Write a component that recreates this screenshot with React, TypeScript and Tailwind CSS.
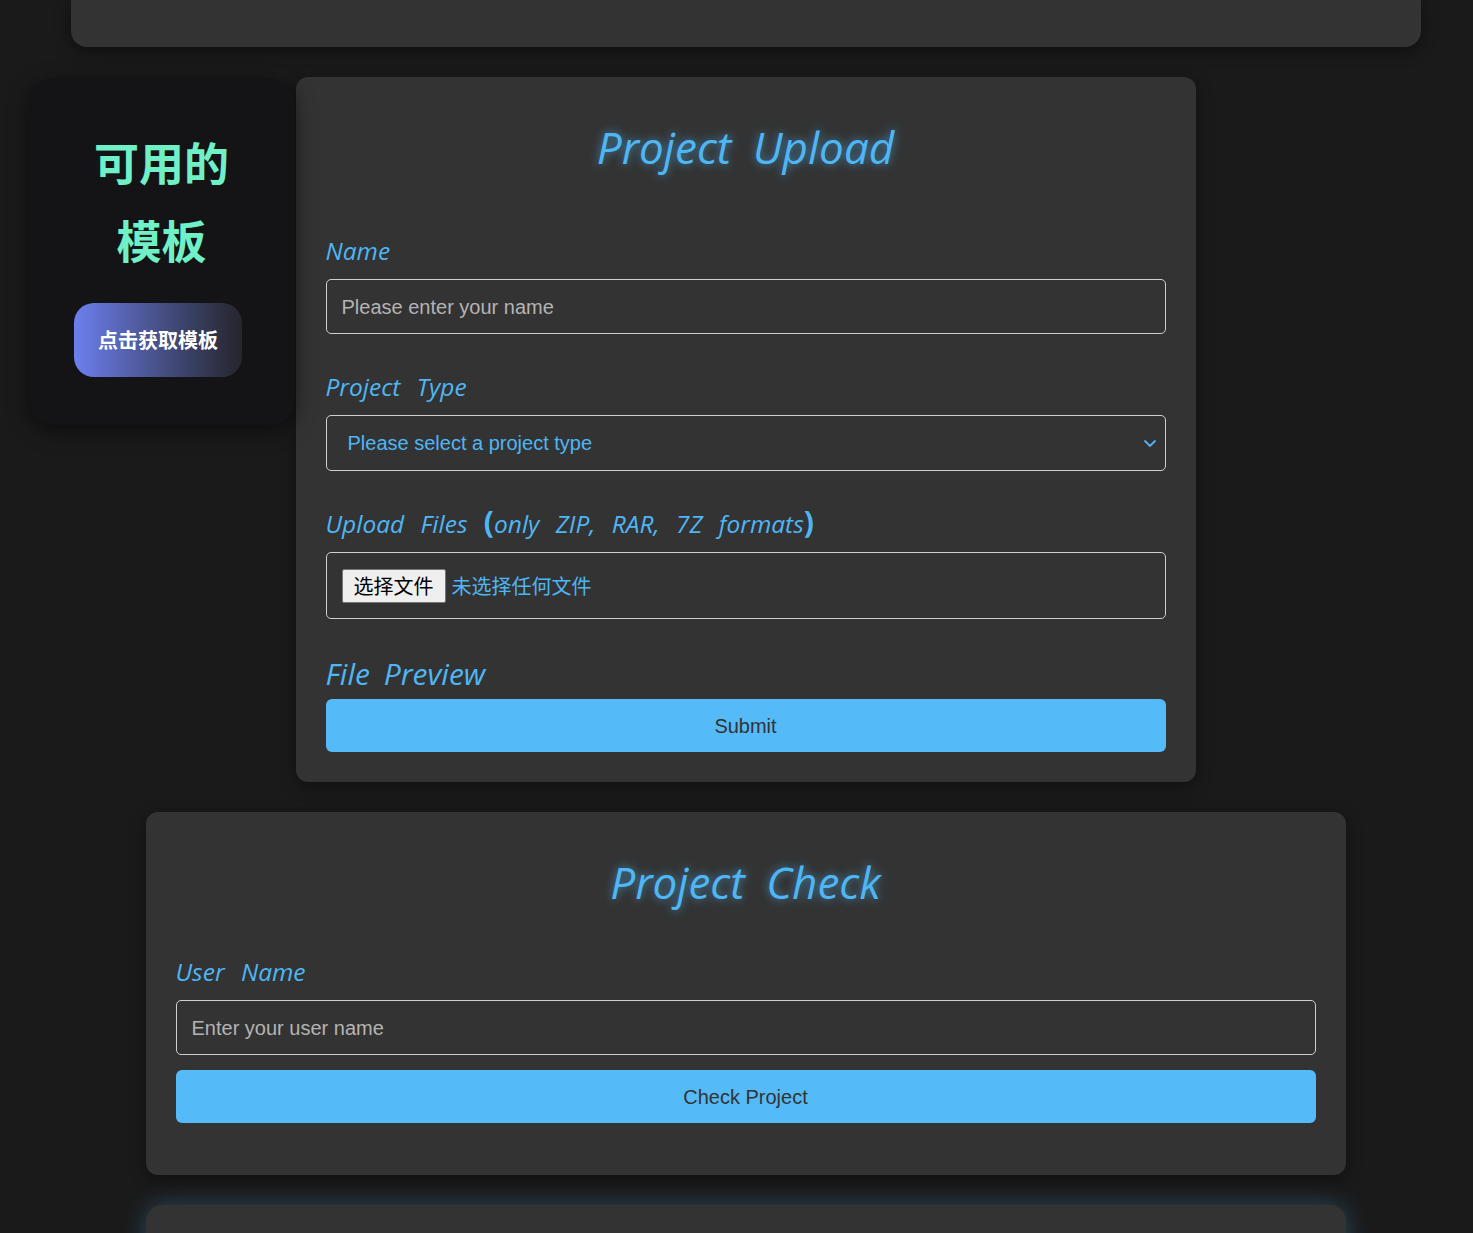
import React from "react";

const labelFont = { fontFamily: '"Open Sans", "Noto Sans", sans-serif' };

function Label({ children, big = false }: { children: React.ReactNode; big?: boolean }) {
  return (
    <div
      style={labelFont}
      className={`italic text-[#4fb6f5] ${big ? "text-[30px] h-[36px] leading-[36px] [word-spacing:6px]" : "text-[24.5px] h-[32px] leading-[32px] [word-spacing:10px]"}`}
    >
      {children}
    </div>
  );
}

function Title({ children }: { children: React.ReactNode }) {
  return (
    <h1
      style={labelFont}
      className="italic text-center text-[44px] h-[80px] leading-[80px] text-[#4fb6f5] [word-spacing:10px] [text-shadow:0_0_10px_rgba(79,182,245,0.7)]"
    >
      {children}
    </h1>
  );
}

export default function App() {
  const sans = { fontFamily: '"Liberation Sans", Arial, sans-serif' };
  const cjk = { fontFamily: '"Noto Sans CJK SC", sans-serif' };
  return (
    <div className="relative min-h-screen bg-[#1a1a1a] pl-[18px] overflow-hidden">
      {/* top card (bottom part) */}
      <div className="mx-auto w-[1350px] h-[47px] bg-[#333333] rounded-b-[16px] shadow-[0_4px_16px_rgba(0,0,0,0.45)]" />

      {/* sidebar */}
      <div className="absolute left-[28px] top-[78px] w-[267px] h-[347px] rounded-[26px] bg-[#141416] shadow-[0_6px_20px_rgba(0,0,0,0.5)] flex flex-col items-center pt-[45px]">
        <div style={cjk} className="text-[45px] leading-[78px] font-bold text-[#6ff0c6] text-center">
          <div>可用的</div>
          <div>模板</div>
        </div>
        <button
          style={cjk}
          className="mt-[24px] -ml-[7px] w-[168px] h-[74px] rounded-[20px] bg-gradient-to-r from-[#6d7ff0] to-[#25252d] text-white text-[20px] font-bold"
        >
          点击获取模板
        </button>
      </div>

      {/* upload card */}
      <div className="mx-auto mt-[30px] w-[900px] bg-[#333333] rounded-[12px] p-[30px] shadow-[0_4px_16px_rgba(0,0,0,0.4)]">
        <Title>Project Upload</Title>
        <div className="mt-[48px]">
          <Label>Name</Label>
          <div
            style={sans}
            className="mt-[12px] h-[55px] border border-[#cfcfcf] rounded-[5px] px-[15px] flex items-center text-[20px] text-[#b4b4b4]"
          >
            Please enter your name
          </div>
        </div>
        <div className="mt-[37px]">
          <Label>Project Type</Label>
          <div
            style={sans}
            className="mt-[12px] h-[56px] border border-[#cfcfcf] rounded-[5px] pl-[21px] pr-[7px] flex items-center justify-between text-[20px] text-[#4fb6f5]"
          >
            <span>Please select a project type</span>
            <svg width="16" height="16" viewBox="0 0 16 16" fill="none" stroke="#4fb6f5" strokeWidth="1.8">
              <path d="M2.5 5.5l5.5 5.5 5.5-5.5" />
            </svg>
          </div>
        </div>
        <div className="mt-[37px]">
          <Label>
            Upload Files <span className="font-bold not-italic text-[30px] leading-[20px]">(</span>only ZIP, RAR, 7Z formats
            <span className="font-bold not-italic text-[30px] leading-[20px]">)</span>
          </Label>
          <div className="mt-[12px] h-[67px] border border-[#cfcfcf] rounded-[5px] px-[15px] flex items-center">
            <span
              style={cjk}
              className="h-[34px] px-[11px] bg-[#efefef] border border-[#767676] rounded-[2px] text-[20px] leading-[32px] text-black"
            >
              选择文件
            </span>
            <span style={cjk} className="ml-[6px] text-[20px] text-[#4fb6f5]">
              未选择任何文件
            </span>
          </div>
        </div>
        <div className="mt-[37px]">
          <Label big>File Preview</Label>
        </div>
        <button
          style={sans}
          className="mt-[7px] w-full h-[53px] rounded-[6px] bg-[#54baf8] text-[20px] text-[#333333]"
        >
          Submit
        </button>
      </div>

      {/* check card */}
      <div className="mx-auto mt-[30px] w-[1200px] bg-[#333333] rounded-[12px] px-[30px] pt-[30px] pb-[52px] shadow-[0_4px_16px_rgba(0,0,0,0.4)]">
        <Title>Project Check</Title>
        <div className="mt-[34px]">
          <Label>User Name</Label>
          <div
            style={sans}
            className="mt-[12px] h-[55px] border border-[#cfcfcf] rounded-[5px] px-[15px] flex items-center text-[20px] text-[#b4b4b4]"
          >
            Enter your user name
          </div>
        </div>
        <button
          style={sans}
          className="mt-[15px] w-full h-[53px] rounded-[6px] bg-[#54baf8] text-[20px] text-[#333333]"
        >
          Check Project
        </button>
      </div>

      {/* next card */}
      <div className="mx-auto mt-[30px] w-[1200px] h-[200px] bg-[#333333] rounded-[16px] shadow-[0_0_24px_rgba(79,182,245,0.3)]" />
    </div>
  );
}
